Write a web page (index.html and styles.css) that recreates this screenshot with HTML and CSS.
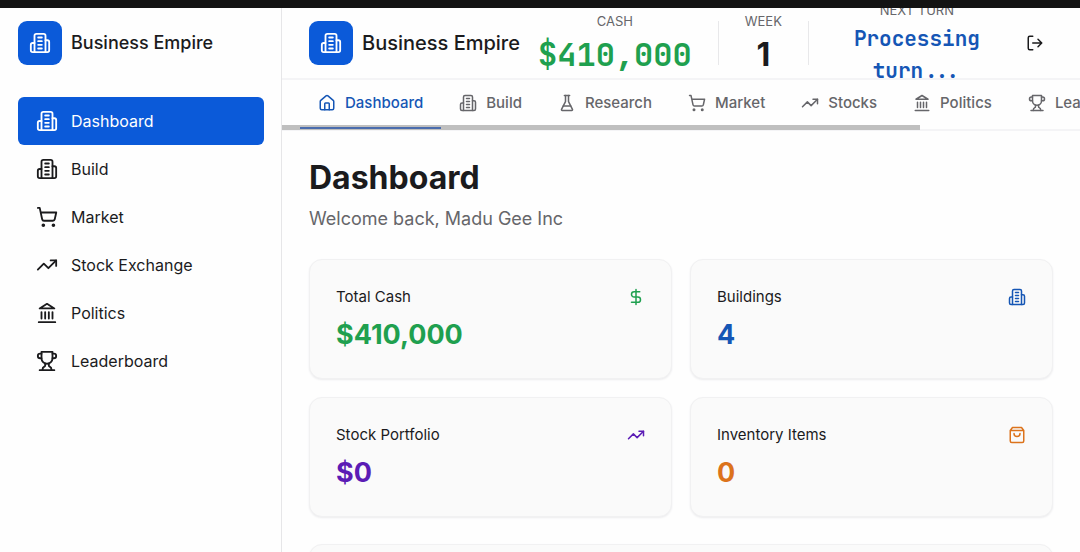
FILE: index.html
```html
<!DOCTYPE html>
<html lang="en">
<head>
    <meta charset="UTF-8">
    <title>Business Empire</title>
    <meta name="viewport" content="width=device-width">
    <link rel="stylesheet" href="styles.css">
</head>
<body>
    <svg class="sprite" aria-hidden="true">
        <symbol id="building" viewBox="0 0 24 24">
            <path d="M6 22V4a2 2 0 0 1 2-2h8a2 2 0 0 1 2 2v18Z"/>
            <path d="M6 12H4a2 2 0 0 0-2 2v6a2 2 0 0 0 2 2h2"/>
            <path d="M18 9h2a2 2 0 0 1 2 2v9a2 2 0 0 1-2 2h-2"/>
            <path d="M10 6h4M10 10h4M10 14h4M10 18h4"/>
        </symbol>
        <symbol id="home" viewBox="0 0 24 24">
            <path d="M15 21v-8a1 1 0 0 0-1-1h-4a1 1 0 0 0-1 1v8"/>
            <path d="M3 10a2 2 0 0 1 .709-1.528l7-5.999a2 2 0 0 1 2.582 0l7 5.999A2 2 0 0 1 21 10v9a2 2 0 0 1-2 2H5a2 2 0 0 1-2-2z"/>
        </symbol>
        <symbol id="flask" viewBox="0 0 24 24">
            <path d="M10 2v7.527a2 2 0 0 1-.211.896L4.72 20.55a1 1 0 0 0 .9 1.45h12.76a1 1 0 0 0 .9-1.45l-5.069-10.127A2 2 0 0 1 14 9.527V2"/>
            <path d="M8.5 2h7M7 16h10"/>
        </symbol>
        <symbol id="cart" viewBox="0 0 24 24">
            <circle cx="8" cy="21" r="1"/>
            <circle cx="19" cy="21" r="1"/>
            <path d="M2.05 2.05h2l2.66 12.42a2 2 0 0 0 2 1.58h9.78a2 2 0 0 0 1.95-1.57l1.65-7.43H5.12"/>
        </symbol>
        <symbol id="trend" viewBox="0 0 24 24">
            <path d="M22 7l-8.5 8.5-5-5L2 17"/>
            <path d="M16 7h6v6"/>
        </symbol>
        <symbol id="landmark" viewBox="0 0 24 24">
            <path d="M3 22h18M6 18v-7M10 18v-7M14 18v-7M18 18v-7"/>
            <path d="M12 2l8 5H4z"/>
        </symbol>
        <symbol id="trophy" viewBox="0 0 24 24">
            <path d="M6 9H4.500a2.500 2.500 0 0 1 0-5H6M18 9h1.500a2.500 2.500 0 0 0 0-5H18M4 22h16"/>
            <path d="M10 14.660V17c0 .550-.470.980-.970 1.210C7.850 18.750 7 20.240 7 22M14 14.660V17c0 .550.470.980.970 1.210C16.150 18.750 17 20.240 17 22"/>
            <path d="M18 2H6v7a6 6 0 0 0 12 0V2Z"/>
        </symbol>
        <symbol id="logout" viewBox="0 0 24 24">
            <path d="M9 21H5a2 2 0 0 1-2-2V5a2 2 0 0 1 2-2h4M16 17l5-5-5-5M21 12H9"/>
        </symbol>
        <symbol id="dollar" viewBox="0 0 24 24">
            <path d="M12 2v20M17 5H9.500a3.500 3.500 0 0 0 0 7h5a3.500 3.500 0 0 1 0 7H6"/>
        </symbol>
        <symbol id="bag" viewBox="0 0 24 24">
            <path d="M6 2L3 6v14a2 2 0 0 0 2 2h14a2 2 0 0 0 2-2V6l-3-4ZM3 6h18M16 10a4 4 0 0 1-8 0"/>
        </symbol>
    </svg>

    <div class="topbar"></div>

    <div class="app">
        <aside class="sidebar">
            <div class="brand">
                <span class="logo"><svg class="icon icon-lg"><use href="#building"/></svg></span>
                <span class="brand-name">Business Empire</span>
            </div>
            <nav class="menu" aria-label="Main">
                <a class="menu-item active" href="#"><svg class="icon icon-lg"><use href="#building"/></svg>Dashboard</a>
                <a class="menu-item" href="#"><svg class="icon icon-lg"><use href="#building"/></svg>Build</a>
                <a class="menu-item" href="#"><svg class="icon icon-lg"><use href="#cart"/></svg>Market</a>
                <a class="menu-item" href="#"><svg class="icon icon-lg"><use href="#trend"/></svg>Stock Exchange</a>
                <a class="menu-item" href="#"><svg class="icon icon-lg"><use href="#landmark"/></svg>Politics</a>
                <a class="menu-item" href="#"><svg class="icon icon-lg"><use href="#trophy"/></svg>Leaderboard</a>
            </nav>
        </aside>

        <div class="content">
            <header class="header">
                <div class="brand">
                    <span class="logo"><svg class="icon icon-lg"><use href="#building"/></svg></span>
                    <span class="brand-name large">Business Empire</span>
                </div>
                <div class="stats">
                    <div class="stat">
                        <span class="stat-label">CASH</span>
                        <span class="stat-value mono green">$410,000</span>
                    </div>
                    <div class="divider"></div>
                    <div class="stat">
                        <span class="stat-label">WEEK</span>
                        <span class="stat-value">1</span>
                    </div>
                    <div class="divider"></div>
                    <div class="stat turn">
                        <span class="stat-label">NEXT TURN</span>
                        <span class="turn-value mono">Processing turn...</span>
                    </div>
                </div>
                <button class="logout" type="button" aria-label="Log out"><svg class="icon"><use href="#logout"/></svg></button>
            </header>

            <div class="tabs-wrap">
                <nav class="tabs" aria-label="Sections">
                    <a class="tab active" href="#"><svg class="icon"><use href="#home"/></svg>Dashboard</a>
                    <a class="tab" href="#"><svg class="icon"><use href="#building"/></svg>Build</a>
                    <a class="tab" href="#"><svg class="icon"><use href="#flask"/></svg>Research</a>
                    <a class="tab" href="#"><svg class="icon"><use href="#cart"/></svg>Market</a>
                    <a class="tab" href="#"><svg class="icon"><use href="#trend"/></svg>Stocks</a>
                    <a class="tab" href="#"><svg class="icon"><use href="#landmark"/></svg>Politics</a>
                    <a class="tab" href="#"><svg class="icon"><use href="#trophy"/></svg>Leaderboard</a>
                </nav>
                <div class="scroll-thumb"></div>
            </div>

            <main class="main">
                <h1>Dashboard</h1>
                <p class="welcome">Welcome back, Madu Gee Inc</p>
                <div class="cards">
                    <section class="card">
                        <div class="card-head"><h2>Total Cash</h2><svg class="icon green"><use href="#dollar"/></svg></div>
                        <p class="card-value green">$410,000</p>
                    </section>
                    <section class="card">
                        <div class="card-head"><h2>Buildings</h2><svg class="icon blue"><use href="#building"/></svg></div>
                        <p class="card-value blue">4</p>
                    </section>
                    <section class="card">
                        <div class="card-head"><h2>Stock Portfolio</h2><svg class="icon purple"><use href="#trend"/></svg></div>
                        <p class="card-value purple">$0</p>
                    </section>
                    <section class="card">
                        <div class="card-head"><h2>Inventory Items</h2><svg class="icon orange"><use href="#bag"/></svg></div>
                        <p class="card-value orange">0</p>
                    </section>
                </div>
                <section class="card panel"></section>
            </main>
        </div>
    </div>
</body>
</html>
```
FILE: styles.css
```css
*{
    padding: 0;
    margin: 0;
    box-sizing: border-box;
}
body{
    font-family: Inter, "Liberation Sans", sans-serif;
    font-size: 16px;
    line-height: 24px;
    color: #1b1b1d;
    background: #fefefe;
    height: 100vh;
    display: flex;
    flex-direction: column;
    overflow: hidden;
}
a{
    color: inherit;
    text-decoration: none;
}
.sprite{
    display: none;
}
.icon{
    width: 18px;
    height: 18px;
    flex: none;
    fill: none;
    stroke: currentColor;
    stroke-width: 2;
    stroke-linecap: round;
    stroke-linejoin: round;
}
.icon-lg{
    width: 22px;
    height: 22px;
}
.green{
    color: #1fa04f;
}
.blue{
    color: #1556b5;
}
.purple{
    color: #5b1cb5;
}
.orange{
    color: #dc731c;
}
.mono{
    font-family: "JetBrains Mono", "Liberation Mono", monospace;
}
.topbar{
    height: 8px;
    flex: none;
    background: #131313;
    position: relative;
    z-index: 1;
}
.app{
    flex: 1;
    min-height: 0;
    display: grid;
    grid-template-columns: 282px minmax(0, 1fr);
}

/* sidebar */
.sidebar{
    border-right: 1px solid #e6e6e8;
    padding: 13px 17px 0 18px;
}
.brand{
    display: flex;
    align-items: center;
    gap: 9px;
    flex: none;
}
.logo{
    width: 44px;
    height: 44px;
    border-radius: 9px;
    background: #0b5ad9;
    color: #fff;
    display: flex;
    align-items: center;
    justify-content: center;
}
.brand-name{
    font-size: 18px;
    font-weight: 500;
    white-space: nowrap;
}
.brand-name.large{
    font-size: 20px;
}
.menu{
    margin-top: 32px;
}
.menu-item{
    display: flex;
    align-items: center;
    gap: 13px;
    height: 48px;
    padding: 0 18px;
    border-radius: 6px;
}
.menu-item.active{
    background: #0b5ad9;
    color: #fff;
}

/* header */
.header{
    height: 72px;
    padding: 0 27px;
    display: flex;
    align-items: center;
    justify-content: space-between;
    border-bottom: 2px solid #f4f4f6;
}
.stats{
    display: flex;
    align-items: center;
    gap: 26px;
}
.stat{
    display: flex;
    flex-direction: column;
    align-items: center;
    gap: 3px;
    text-align: center;
}
.stat-label{
    font-size: 13px;
    line-height: 20px;
    color: #66666a;
}
.stat-value{
    font-size: 32px;
    font-weight: 700;
    line-height: 42px;
}
.turn{
    width: 164px;
}
.turn-value{
    font-size: 21px;
    font-weight: 600;
    line-height: 32px;
    color: #1556b5;
}
.divider{
    width: 1px;
    height: 44px;
    background: #e8e8ea;
}
.logout{
    border: 0;
    background: none;
    padding: 9px;
    display: flex;
    color: #1b1b1d;
}

/* tabs */
.tabs-wrap{
    position: relative;
    border-bottom: 2px solid #f4f4f6;
}
.tabs{
    display: flex;
    padding: 0 18px;
    overflow-x: auto;
    scrollbar-width: none;
}
.tab{
    display: flex;
    align-items: center;
    gap: 9px;
    flex: none;
    height: 49px;
    padding: 0 18px 2px;
    border-bottom: 2px solid transparent;
    color: #66666a;
    font-size: 15px;
    font-weight: 500;
    position: relative;
    z-index: 1;
}
.tab.active{
    color: #1556b5;
    border-color: #4a6cad;
}
.scroll-thumb{
    position: absolute;
    left: 0;
    bottom: -1px;
    width: 80%;
    height: 5px;
    background: #bfbfbf;
}

/* dashboard */
.main{
    padding: 27px;
}
h1{
    font-size: 32px;
    font-weight: 700;
    line-height: 40px;
}
.welcome{
    margin-top: 8px;
    font-size: 18px;
    line-height: 26px;
    color: #66666a;
}
.cards{
    margin-top: 27px;
    display: grid;
    grid-template-columns: repeat(2, minmax(0, 1fr));
    gap: 18px;
}
.card{
    padding: 25px 26px;
    min-height: 120px;
    background: #fafafa;
    border: 1px solid #f1f1f2;
    border-radius: 13px;
    box-shadow: 0 1px 2px #ececee;
}
.card-head{
    display: flex;
    align-items: center;
    justify-content: space-between;
}
h2{
    font-size: 15px;
    font-weight: 400;
    line-height: 24px;
}
.card-value{
    margin-top: 8px;
    font-size: 27px;
    font-weight: 700;
    line-height: 36px;
}
.panel{
    margin-top: 27px;
}
```
